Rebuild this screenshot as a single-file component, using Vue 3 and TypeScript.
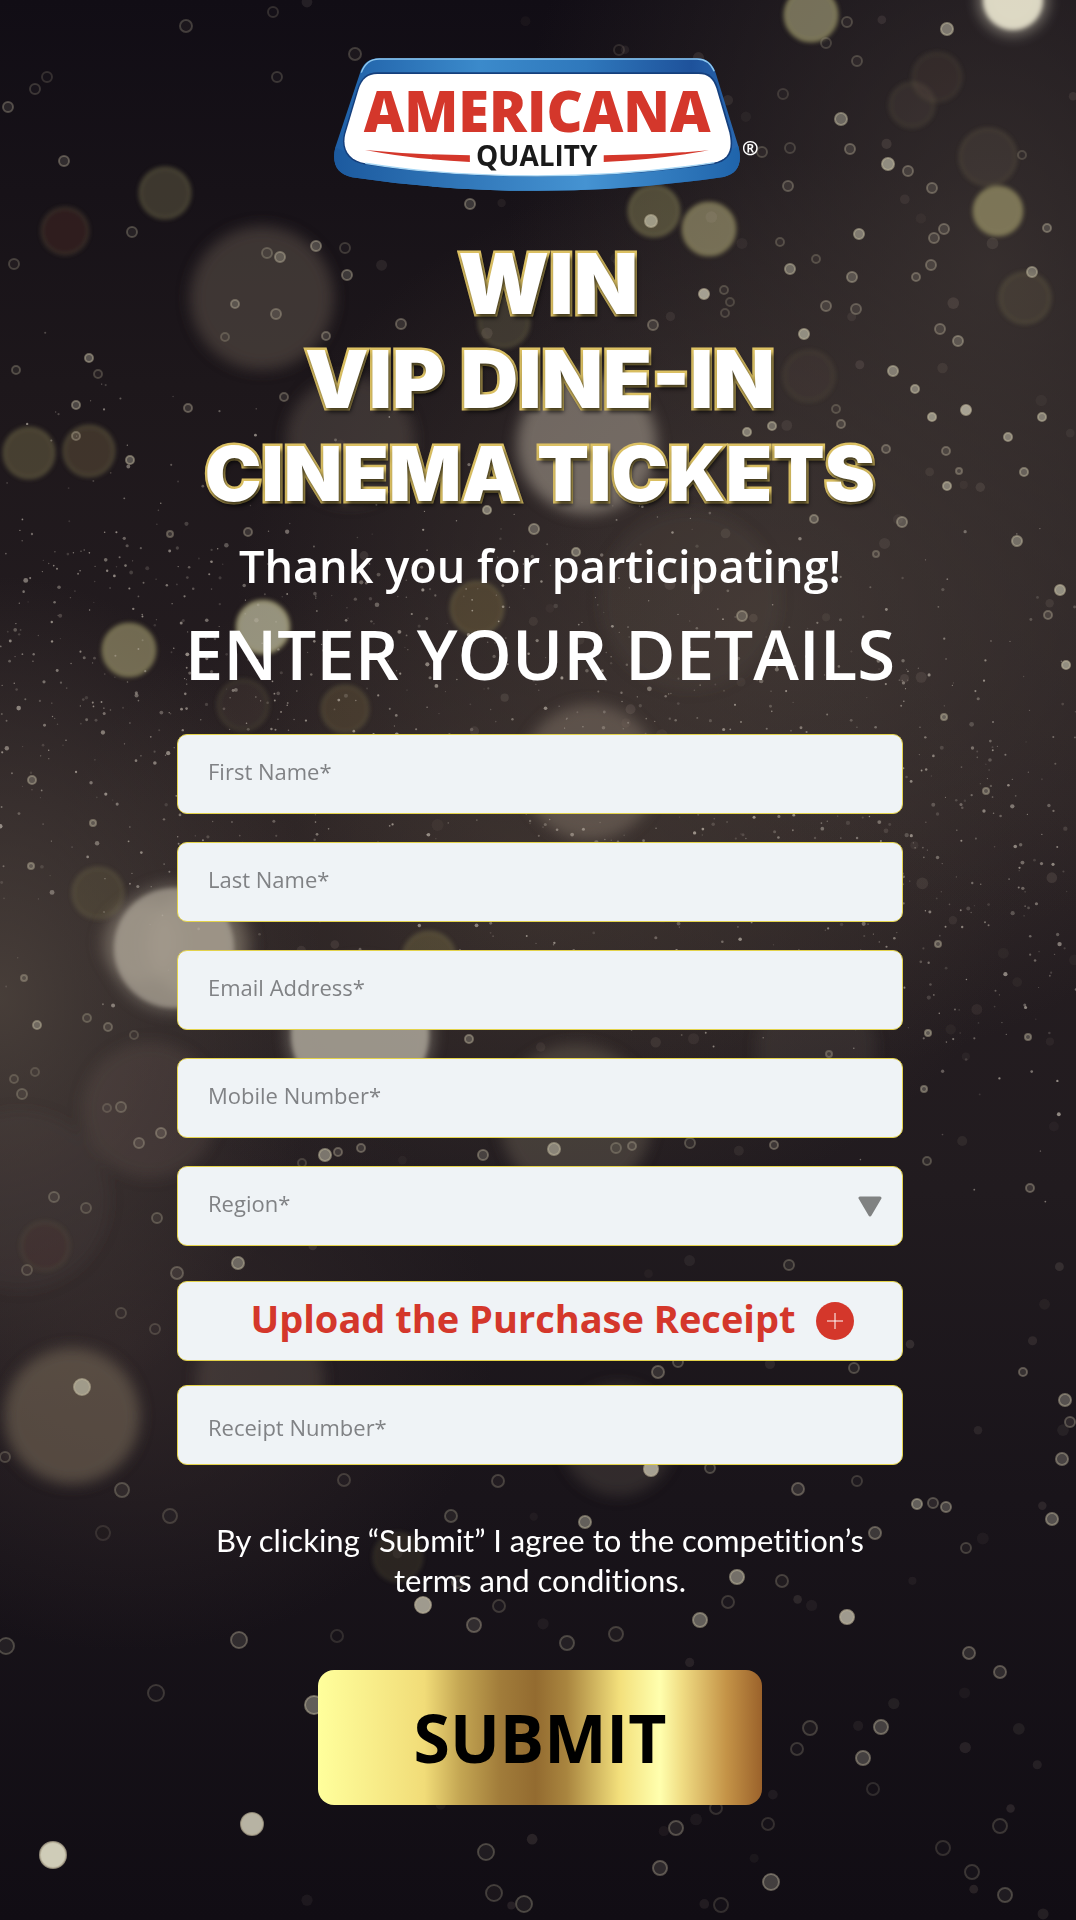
<script setup lang="ts">
import { reactive } from 'vue'

interface Field {
  id: string
  label: string
  type: string
}

// x, y, radius, colour, opacity
type Light = [number, number, number, string, number]
// x, y, radius, opacity
type Dot = [number, number, number, number]

const fields: Field[] = [
  { id: 'firstName', label: 'First Name*', type: 'text' },
  { id: 'lastName', label: 'Last Name*', type: 'text' },
  { id: 'email', label: 'Email Address*', type: 'email' },
  { id: 'mobile', label: 'Mobile Number*', type: 'tel' },
]

const form = reactive<Record<string, string>>({
  firstName: '',
  lastName: '',
  email: '',
  mobile: '',
  region: '',
  receipt: '',
})

// Large, out-of-focus discs
const hazes: Light[] = [
  [262, 298, 72, '#6b5f54', 0.45],
  [587, 444, 70, '#a0968a', 0.6],
  [350, 440, 64, '#6b5f54', 0.38],
  [590, 772, 68, '#8a7d6e', 0.45],
  [140, 942, 40, '#8d8270', 0.3],
  [200, 945, 52, '#7e7264', 0.5],
  [576, 1120, 76, '#7a6e62', 0.36],
  [816, 1048, 60, '#6b6055', 0.2],
  [150, 1110, 68, '#6b6055', 0.25],
  [72, 1416, 68, '#6f6252', 0.65],
  [260, 1380, 64, '#6b5f54', 0.35],
  [618, 1440, 56, '#6b5f54', 0.3],
  [690, 600, 90, '#5f554a', 0.16],
  [20, 1200, 90, '#5a4e48', 0.15],
]

const glows: Light[] = [
  [174, 948, 60, '#b5ae9e', 0.8],
  [360, 1034, 69, '#b8b2a4', 0.9],
  [1013, 0, 30, '#fdfae0', 1],
]

// Medium discs with a brighter rim: x, y, radius, colour, opacity
const discs: Light[] = [
  [811, 15, 28, '#b0ab80', 0.8],
  [165, 193, 27, '#8a835c', 0.45],
  [65, 231, 25, '#8a4038', 0.28],
  [654, 211, 27, '#98925f', 0.55],
  [709, 229, 28, '#bdb684', 0.7],
  [998, 211, 26, '#c0b880', 0.7],
  [1025, 298, 27, '#7d7558', 0.28],
  [504, 322, 27, '#8a835c', 0.38],
  [809, 376, 27, '#7d6a58', 0.16],
  [29, 453, 27, '#98905e', 0.45],
  [89, 451, 27, '#8a7650', 0.42],
  [263, 627, 28, '#d8d5b4', 0.85],
  [129, 650, 28, '#b8b280', 0.7],
  [477, 608, 28, '#98824c', 0.4],
  [243, 705, 27, '#7d7058', 0.22],
  [345, 709, 25, '#98824c', 0.3],
  [98, 893, 27, '#8a7d50', 0.28],
  [429, 958, 28, '#a09455', 0.35],
  [398, 1557, 26, '#98904c', 0.2],
  [912, 105, 24, '#7d6a60', 0.2],
  [937, 77, 26, '#7d6058', 0.18],
  [988, 157, 30, '#7d6a60', 0.24],
  [45, 1246, 26, '#7d4a40', 0.14],
]

const dots: Dot[] = [
  [186, 26, 7, 0.35], [273, 12, 6, 0.25], [355, 54, 7, 0.35], [277, 77, 6, 0.3], [847, 22, 6, 0.35],
  [826, 43, 6, 0.3], [947, 29, 7, 0.75], [857, 61, 6, 0.35], [619, 50, 6, 0.2], [841, 119, 7, 0.7],
  [850, 149, 6, 0.5], [888, 164, 7, 0.8], [908, 171, 6, 0.5], [932, 188, 6, 0.5], [788, 186, 6, 0.45],
  [470, 204, 6, 0.55], [651, 221, 7, 0.8], [132, 232, 6, 0.4], [316, 246, 6, 0.6], [345, 248, 6, 0.3],
  [267, 253, 6, 0.4], [280, 257, 6, 0.6], [347, 275, 6, 0.55], [235, 304, 5, 0.55], [276, 314, 6, 0.5],
  [401, 324, 6, 0.5], [326, 336, 5, 0.5], [225, 337, 5, 0.35], [859, 234, 6, 0.75], [944, 229, 6, 0.5],
  [934, 238, 6, 0.5], [790, 269, 6, 0.7], [852, 277, 6, 0.6], [704, 294, 6, 0.85], [931, 265, 6, 0.5],
  [916, 277, 5, 0.5], [1032, 272, 6, 0.7], [826, 306, 6, 0.5], [856, 309, 6, 0.45], [804, 334, 6, 0.8],
  [653, 325, 6, 0.5], [958, 341, 6, 0.6], [893, 371, 6, 0.75], [915, 389, 5, 0.75], [89, 358, 5, 0.65],
  [98, 374, 5, 0.35], [16, 370, 5, 0.4], [64, 161, 6, 0.5], [8, 107, 6, 0.45], [35, 89, 6, 0.3],
  [47, 77, 6, 0.25], [14, 264, 6, 0.35], [76, 405, 5, 0.6], [188, 408, 5, 0.5], [284, 397, 5, 0.45],
  [76, 436, 5, 0.5], [130, 460, 5, 0.65], [932, 417, 5, 0.8], [966, 410, 6, 0.85], [747, 432, 5, 0.75],
  [772, 426, 5, 0.7], [1042, 417, 5, 0.75], [947, 486, 5, 0.75], [1024, 472, 5, 0.65], [1008, 437, 5, 0.75],
  [487, 510, 5, 0.75], [534, 529, 6, 0.65], [576, 552, 5, 0.7], [814, 519, 5, 0.6], [902, 522, 6, 0.6],
  [248, 532, 5, 0.5], [170, 534, 4, 0.5], [876, 554, 4, 0.45], [1060, 590, 6, 0.8], [1048, 615, 5, 0.5],
  [1017, 541, 6, 0.7], [762, 152, 6, 0.35], [790, 148, 6, 0.3], [783, 94, 6, 0.25], [1022, 155, 5, 0.3],
  [1047, 228, 5, 0.55], [780, 242, 5, 0.35], [816, 259, 5, 0.35], [724, 290, 5, 0.35], [730, 302, 5, 0.3],
  [725, 313, 5, 0.3], [866, 347, 0, 0], [841, 424, 5, 0.5], [886, 449, 5, 0.5], [959, 471, 4, 0.5],
  [946, 451, 5, 0.5], [836, 409, 5, 0.35], [940, 329, 6, 0.5],
  [1066, 665, 5, 0.8], [742, 616, 6, 0.6], [944, 717, 4, 0.65], [986, 791, 4, 0.6], [32, 780, 5, 0.6],
  [93, 823, 4, 0.6], [31, 866, 4, 0.6], [24, 978, 4, 0.5], [37, 1025, 5, 0.65], [928, 1033, 4, 0.65],
  [87, 1018, 5, 0.4], [108, 1027, 5, 0.45], [134, 1035, 5, 0.3], [14, 1079, 5, 0.35], [22, 1094, 6, 0.4],
  [35, 1072, 5, 0.3], [107, 1108, 5, 0.3], [121, 1107, 6, 0.4], [157, 1218, 6, 0.4], [302, 1163, 5, 0.3],
  [361, 1148, 5, 0.5], [338, 1152, 5, 0.5], [27, 1270, 6, 0.35], [121, 1313, 6, 0.3], [155, 1329, 6, 0.3],
  [1028, 1037, 4, 0.6], [938, 944, 4, 0.6], [829, 1054, 4, 0.45], [469, 1039, 5, 0.6], [924, 1089, 4, 0.6],
  [554, 1149, 7, 0.75], [483, 1155, 6, 0.55], [325, 1155, 7, 0.75], [616, 1148, 6, 0.4], [632, 1146, 5, 0.45],
  [690, 1143, 6, 0.4], [774, 1145, 5, 0.5], [161, 1133, 6, 0.5], [139, 1143, 6, 0.45], [238, 1263, 7, 0.7],
  [177, 1273, 7, 0.45], [789, 1265, 6, 0.4], [86, 1208, 6, 0.35], [54, 1197, 6, 0.4], [1030, 1188, 5, 0.5],
  [927, 1161, 5, 0.4], [82, 1387, 9, 0.8], [122, 1490, 8, 0.4], [170, 1516, 8, 0.3], [103, 1533, 8, 0.2],
  [5, 1457, 6, 0.35], [658, 1372, 7, 0.5], [678, 1362, 6, 0.4], [854, 1368, 6, 0.4], [1023, 1372, 5, 0.5],
  [1065, 1400, 7, 0.65], [1070, 1422, 6, 0.45], [1062, 1459, 7, 0.6], [1052, 1519, 7, 0.65], [651, 1469, 8, 0.85],
  [710, 1468, 6, 0.4], [498, 1481, 7, 0.35], [344, 1480, 7, 0.3], [798, 1489, 7, 0.5], [857, 1481, 6, 0.3],
  [917, 1504, 6, 0.7], [933, 1503, 6, 0.45], [946, 1507, 6, 0.6], [585, 1522, 7, 0.7], [451, 1516, 7, 0.4],
  [875, 1533, 7, 0.55], [966, 1548, 6, 0.35], [737, 1577, 8, 0.75], [782, 1581, 7, 0.35], [458, 1582, 7, 0.4],
  [423, 1605, 9, 0.85], [474, 1625, 8, 0.5], [499, 1606, 7, 0.3], [700, 1620, 8, 0.7], [847, 1617, 8, 0.85],
  [728, 1602, 7, 0.3], [567, 1643, 8, 0.4], [616, 1634, 8, 0.35], [239, 1640, 9, 0.5], [337, 1636, 7, 0.22],
  [6, 1646, 9, 0.4], [969, 1653, 7, 0.5], [1000, 1672, 7, 0.5], [156, 1693, 9, 0.3], [314, 1705, 10, 0.7],
  [252, 1824, 12, 0.9], [53, 1855, 14, 0.95], [881, 1727, 8, 0.6], [863, 1758, 8, 0.6], [810, 1728, 8, 0.35],
  [797, 1749, 7, 0.3], [873, 1789, 7, 0.22], [676, 1828, 8, 0.45], [486, 1852, 9, 0.4], [660, 1868, 8, 0.5],
  [771, 1882, 9, 0.6], [716, 1808, 7, 0.25], [768, 1824, 7, 0.25], [494, 1893, 9, 0.35], [524, 1904, 9, 0.4],
  [943, 1848, 8, 0.25], [972, 1872, 8, 0.3], [1000, 1826, 8, 0.3], [1005, 1895, 8, 0.4], [721, 1905, 8, 0.25],
]

let seed = 41
function random(): number {
  seed = (seed * 16807) % 2147483647
  return seed / 2147483647
}

// Fine dust drifting from the left edge down to the right edge
const dust: Dot[] = []
for (let i = 0; i < 1300; i++) {
  const x = random() * 1076
  const spread = (random() + random() + random() - 1.5) * 260
  dust.push([x, 650 + x * 0.2 + spread, 0.6 + random() * random() * 1.9, 0.15 + random() * 0.5])
}

// Faint bubbles across the whole scene
const bubbles: Dot[] = []
for (let i = 0; i < 150; i++) {
  bubbles.push([300 + random() * 776, random() * 1920, 4 + random() * 2, 0.05 + random() * 0.12])
}
</script>

<template>
  <div class="page">
    <svg class="scene" viewBox="0 0 1076 1920" preserveAspectRatio="xMidYMid slice" aria-hidden="true">
      <defs>
        <filter id="soft" x="-30%" y="-30%" width="160%" height="160%"><feGaussianBlur stdDeviation="7" /></filter>
        <filter id="edge" x="-30%" y="-30%" width="160%" height="160%"><feGaussianBlur stdDeviation="2" /></filter>
        <filter id="dot" x="-30%" y="-30%" width="160%" height="160%"><feGaussianBlur stdDeviation="0.7" /></filter>
      </defs>
      <g filter="url(#soft)">
        <circle v-for="(l, i) in hazes" :key="i" :cx="l[0]" :cy="l[1]" :r="l[2]" :fill="l[3]" :opacity="l[4]" />
        <circle v-for="(l, i) in glows" :key="'g' + i" :cx="l[0]" :cy="l[1]" :r="l[2] + 5" :fill="l[3]" :opacity="l[4] * 0.4" />
      </g>
      <g filter="url(#edge)">
        <circle v-for="(l, i) in glows" :key="i" :cx="l[0]" :cy="l[1]" :r="l[2]" :fill="l[3]" :opacity="l[4] * 0.75" />
        <g v-for="(l, i) in discs" :key="'d' + i" :opacity="l[4]">
          <circle :cx="l[0]" :cy="l[1]" :r="l[2] - 1" :fill="l[3]" fill-opacity="0.75" />
          <circle :cx="l[0]" :cy="l[1]" :r="l[2] - 2" fill="none" stroke="#a8a468" stroke-width="3" stroke-opacity="0.6" />
        </g>
      </g>
      <circle v-for="(d, i) in dust" :key="'p' + i" :cx="d[0]" :cy="d[1]" :r="d[2]" fill="#cfc6ba" :opacity="d[3]" />
      <g filter="url(#dot)">
        <circle v-for="(d, i) in bubbles" :key="'b' + i" :cx="d[0]" :cy="d[1]" :r="d[2]" fill="#a8988c" :opacity="d[3]" />
        <circle
          v-for="(d, i) in dots"
          :key="'o' + i"
          :cx="d[0]"
          :cy="d[1]"
          :r="Math.max(d[2] - 1, 0)"
          fill="#cfccb8"
          :fill-opacity="d[3] * d[3] * d[3] * 1.2"
          stroke="#b8b098"
          :stroke-opacity="d[3] * 0.8"
          stroke-width="2"
        />
      </g>
    </svg>

    <main class="content">
      <svg class="logo" viewBox="6 48 1308 414" role="img" aria-label="Americana Quality">
        <defs>
          <linearGradient id="frame" x1="0" x2="1" y1="0" y2="0">
            <stop offset="0" stop-color="#1f5fa6" />
            <stop offset="0.36" stop-color="#3b8acb" />
            <stop offset="0.62" stop-color="#2f78bc" />
            <stop offset="0.88" stop-color="#1e529b" />
            <stop offset="1" stop-color="#2a69b0" />
          </linearGradient>
          <linearGradient id="frameBottom" x1="0" x2="1" y1="0" y2="0">
            <stop offset="0" stop-color="#1c5a9f" />
            <stop offset="0.62" stop-color="#4593d2" />
            <stop offset="1" stop-color="#1f64ab" />
          </linearGradient>
        </defs>
        <path
          d="M178 55H1132C1162 55 1178 70 1188 98L1256 318C1270 372 1254 402 1212 411Q930 453 652 453Q370 453 96 412C52 404 34 372 46 322L119 102C128 72 146 55 178 55Z"
          fill="url(#frame)"
        />
        <path
          d="M46 322C34 372 52 404 96 412Q370 453 652 453Q930 453 1212 411C1254 402 1270 372 1256 318L1200 350Q930 395 652 395Q370 395 110 350Z"
          fill="url(#frameBottom)"
        />
        <path d="M124 98C134 70 150 57 178 57H1132C1160 57 1174 70 1184 94" fill="none" stroke="#8cc6ee" stroke-width="4" />
        <path
          d="M172 97H1138C1168 97 1184 112 1194 140L1234 276C1246 334 1230 362 1186 372Q930 410 652 410Q370 410 134 374C84 366 60 330 72 280L112 146C124 112 142 97 172 97Z"
          fill="#153f7c"
        />
        <path
          d="M172 102H1136C1166 102 1180 116 1190 144L1229 278C1241 332 1226 359 1184 368Q930 408 652 408Q370 408 136 370C88 362 65 328 76 282L116 148C126 116 144 102 172 102Z"
          fill="#fff"
        />
        <path d="M136 370Q370 408 652 408Q930 408 1184 368" fill="none" stroke="#a9d8f5" stroke-width="4" />
        <text class="brand" x="652" y="277">AMERICANA</text>
        <text class="quality" x="651" y="378">QUALITY</text>
        <path d="M135 330Q290 345 450 346V366Q280 358 135 330Z" fill="#d4372b" />
        <path d="M1168 331Q1010 345 852 346V366Q1020 358 1168 331Z" fill="#d4372b" />
        <text class="registered" x="1292" y="344">®</text>
      </svg>

      <h1 class="headline">
        <span class="line line-large">&nbsp;WIN</span>
        <span class="line line-medium">VIP DINE-IN</span>
        <span class="line">CINEMA TICKETS</span>
      </h1>

      <p class="thanks">Thank you for participating!</p>
      <h2 class="title">ENTER YOUR DETAILS</h2>

      <form class="form" @submit.prevent>
        <div class="fields">
          <input
            v-for="f in fields"
            :key="f.id"
            :id="f.id"
            v-model="form[f.id]"
            class="box field"
            :type="f.type"
            :placeholder="f.label"
            :aria-label="f.label"
          />
          <div class="select-wrap">
            <select id="region" v-model="form.region" class="box field" aria-label="Region*">
              <option value="">Region*</option>
            </select>
            <svg class="arrow" viewBox="0 0 24 21" aria-hidden="true">
              <path d="M2 2H22L12 19Z" fill="#808282" stroke="#808282" stroke-width="3" stroke-linejoin="round" />
            </svg>
          </div>
        </div>

        <button type="button" class="box upload">
          <span class="upload-text">Upload the Purchase Receipt</span>
          <svg class="plus" viewBox="0 0 38 38" aria-hidden="true">
            <circle cx="19" cy="19" r="19" fill="#d4372b" />
            <path d="M11 19H27M19 11V27" stroke="#fff" stroke-width="1" />
          </svg>
        </button>

        <input
          id="receipt"
          v-model="form.receipt"
          class="box field receipt"
          type="text"
          placeholder="Receipt Number*"
          aria-label="Receipt Number*"
        />

        <p class="terms">By clicking “Submit” I agree to the competition’s<br />terms and conditions.</p>
        <button type="submit" class="submit">SUBMIT</button>
      </form>
    </main>
  </div>
</template>

<style>
body {
  margin: 0;
  background: #120d14;
}
</style>

<style scoped>
.page {
  position: relative;
  box-sizing: border-box;
  min-height: 100vh;
  padding: 56px 20px 114px 24px;
  overflow: hidden;
  font-family: 'Open Sans', 'Noto Sans', sans-serif;
  color: #fff;
  background:
    radial-gradient(ellipse 30% 22% at 0% 52%, #50463fcc, transparent),
    radial-gradient(ellipse 45% 34% at 92% 14%, #3c3432cc, transparent),
    radial-gradient(ellipse 50% 24% at 72% 32%, #463c37cc, transparent),
    radial-gradient(ellipse 45% 18% at 50% 46%, #3e342fcc, transparent),
    radial-gradient(ellipse 34% 16% at 12% 70%, #33292acc, transparent),
    linear-gradient(180deg, #110d15 0%, #1d171b 20%, #261e21 42%, #211b1f 62%, #19141a 78%, #110d14 100%);
}

.scene {
  position: absolute;
  inset: 0;
  width: 100%;
  height: 100%;
}

.content {
  position: relative;
  display: flex;
  flex-direction: column;
  align-items: center;
  max-width: 726px;
  margin: 0 auto;
  text-align: center;
}

.logo {
  width: 60%;
  height: auto;
}

.brand,
.quality,
.registered {
  text-anchor: middle;
  font-family: 'Open Sans', sans-serif;
}

.brand {
  font-size: 168px;
  font-weight: 800;
  fill: #d4372b;
}

.quality {
  font-size: 84px;
  font-weight: 700;
  fill: #1a1a1a;
}

.registered {
  font-size: 60px;
  font-weight: 700;
  fill: #fff;
}

.headline {
  margin: 42px 0 0;
  font-family: Inter, sans-serif;
  font-size: 76px;
  font-weight: 900;
  line-height: 95px;
  -webkit-text-stroke: 5px #dcc163;
  paint-order: stroke fill;
  text-shadow: 2px 4px 4px rgba(0, 0, 0, 0.7);
}

.line {
  display: block;
}

.line-medium {
  font-size: 80px;
}

.line-large {
  font-size: 84px;
}

.thanks {
  margin: 15px 0 0;
  font-size: 45px;
  font-weight: 600;
  line-height: 60px;
}

.title {
  margin: 17px 0 0;
  font-size: 69px;
  font-weight: 600;
  line-height: 80px;
  white-space: nowrap;
}

.form {
  display: flex;
  flex-direction: column;
  align-items: center;
  width: 100%;
  margin-top: 41px;
}

.fields {
  display: flex;
  flex-direction: column;
  gap: 28px;
  width: 100%;
}

.box {
  box-sizing: border-box;
  width: 100%;
  height: 80px;
  border: 1px solid #e3d24a;
  border-radius: 10px;
  background: #eff3f6;
  font-family: inherit;
}

.field {
  display: block;
  padding: 0 30px 5px;
  font-size: 22px;
  color: #808285;
}

.field::placeholder {
  color: #808285;
  opacity: 1;
}

.select-wrap {
  position: relative;
}

select.field {
  appearance: none;
}

.arrow {
  position: absolute;
  top: 30px;
  right: 21px;
  width: 24px;
  height: 21px;
  pointer-events: none;
}

.upload {
  display: flex;
  align-items: center;
  justify-content: center;
  gap: 20px;
  margin-top: 35px;
  padding: 0 0 0 24px;
  font-size: 38px;
  font-weight: 700;
  color: #d4372b;
}

.upload-text {
  padding-bottom: 6px;
}

.plus {
  width: 38px;
  height: 38px;
}

.receipt {
  margin-top: 24px;
  padding: 4px 30px 0;
}

.terms {
  margin: 55px 0 0;
  font-family: Lato, 'Open Sans', sans-serif;
  font-size: 31px;
  font-variant-ligatures: none;
  line-height: 40px;
}

.submit {
  width: 444px;
  max-width: 100%;
  height: 135px;
  margin-top: 70px;
  padding: 0;
  border: 0;
  border-radius: 16px;
  background: linear-gradient(
    90deg,
    #ffff9c 0%,
    #f1dc78 24%,
    #c4a653 32%,
    #a17c3a 41%,
    #936b30 49%,
    #a9853f 56%,
    #f3e07c 68%,
    #ffffae 77%,
    #f0dc83 82%,
    #c49347 92%,
    #9b622b 100%
  );
  font-family: inherit;
  font-size: 66px;
  font-weight: 700;
  color: #000;
}
</style>
